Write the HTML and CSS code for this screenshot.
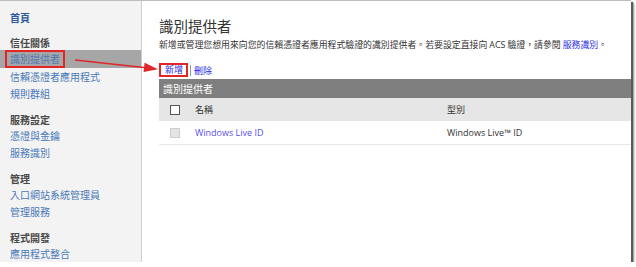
FILE: index.html
```html
<!DOCTYPE html>
<html lang="zh-Hant">
<head>
  <meta charset="UTF-8">
  <title>識別提供者</title>
  <link rel="stylesheet" href="styles.css">
</head>
<body>

<div class="window">
  <div class="sidebar">
    <a class="home" href="#">首頁</a>

    <div class="group">
      <div class="group-title">信任關係</div>
      <a class="item active" href="#"><span class="marked">識別提供者</span></a>
      <a class="item" href="#">信賴憑證者應用程式</a>
      <a class="item" href="#">規則群組</a>
    </div>

    <div class="group">
      <div class="group-title">服務設定</div>
      <a class="item" href="#">憑證與金鑰</a>
      <a class="item" href="#">服務識別</a>
    </div>

    <div class="group">
      <div class="group-title">管理</div>
      <a class="item" href="#">入口網站系統管理員</a>
      <a class="item" href="#">管理服務</a>
    </div>

    <div class="group">
      <div class="group-title">程式開發</div>
      <a class="item" href="#">應用程式整合</a>
    </div>
  </div>

  <div class="main">
    <h1>識別提供者</h1>
    <p class="desc">新增或管理您想用來向您的信賴憑證者應用程式驗證的識別提供者。若要設定直接向 <span class="latin">ACS</span> 驗證，請參閱 <a href="#">服務識別</a>。</p>

    <div class="actions">
      <a class="marked-action" href="#">新增</a><span class="sep"></span><a href="#">刪除</a>
    </div>

    <div class="grid">
      <div class="grid-title">識別提供者</div>
      <div class="row head">
        <span class="check"></span>
        <span>名稱</span>
        <span>型別</span>
      </div>
      <div class="row">
        <span class="check disabled"></span>
        <a class="latin" href="#">Windows Live ID</a>
        <span class="latin">Windows Live™ ID</span>
      </div>
    </div>
  </div>

  <!-- callout arrow from the menu to the add link -->
  <svg class="arrow" width="170" height="80" viewBox="0 0 170 80">
    <line x1="75" y1="59" x2="146" y2="66.8" stroke="#e0262a" stroke-width="1.6"/>
    <polygon points="158,68.2 144.6,61.8 143.6,71" fill="#e0262a"/>
  </svg>
</div>

</body>
</html>
```

FILE: styles.css
```css
body {
  margin: 0;
  background: #fff;
  font-family: "Noto Sans CJK TC", "Open Sans", sans-serif;
  color: #333;
}
a {
  text-decoration: none;
}
.window {
  position: relative;
  display: flex;
  width: 631px;
  height: 261px;
  border-top: 1px solid #bdbdbd;
  background: #fff;
  box-shadow: 2px 2px 1px #5a5a5a, 3px 3px 2px #9a9a9a;
}
.sidebar {
  width: 141px;
  flex-shrink: 0;
  background: #f3f3f3;
  border-right: 1px solid #cfcfcf;
  padding-top: 8px;
  font-size: 10px;
}
.home {
  display: block;
  padding-left: 10px;
  line-height: 17px;
  font-weight: bold;
  color: #2d5a9c;
}
.group {
  margin-top: 9px;
}
.group-title {
  padding-left: 10px;
  line-height: 15px;
  font-weight: bold;
  color: #4a4a4a;
}
.item {
  display: block;
  padding-left: 10px;
  height: 17.5px;
  line-height: 17.5px;
  color: #4a79b8;
}
.item.active {
  background: #a6a6a6;
  padding-left: 5px;
}
.marked {
  display: inline-block;
  box-sizing: border-box;
  height: 17.5px;
  line-height: 13.5px;
  padding: 0 3px;
  border: 2px solid #e42526;
}
.main {
  flex: 1;
  padding: 16px 0 0 17px;
}
h1 {
  margin: 0;
  font-size: 14.5px;
  line-height: 18px;
  font-weight: normal;
  color: #333;
}
.desc {
  margin: 4px 0 0;
  font-size: 8.9px;
  line-height: 12px;
  white-space: nowrap;
  color: #333;
}
.desc a {
  color: #2f2fe0;
}
.latin {
  font-family: "Open Sans", "Noto Sans CJK TC", sans-serif;
}
.actions {
  display: flex;
  align-items: center;
  margin-top: 12px;
  height: 14px;
  font-size: 9px;
}
.actions a {
  color: #2727e6;
}
.marked-action {
  box-sizing: border-box;
  height: 14px;
  line-height: 10px;
  padding: 0 3px 0 4px;
  border: 2px solid #e42526;
}
.sep {
  width: 1px;
  height: 11px;
  margin: 0 3px 0 2px;
  background: #9a9a9a;
}
.grid {
  margin-top: 2px;
}
.grid-title {
  height: 19px;
  line-height: 19px;
  padding-left: 4px;
  background: #7f7f7f;
  color: #fff;
  font-size: 10px;
}
.row {
  display: grid;
  grid-template-columns: 36px 252px 1fr;
  align-items: center;
  height: 23px;
  font-size: 9px;
  color: #333;
  border-bottom: 1px solid #e8e8e8;
}
.row.head {
  background: #e6e6e6;
  border-bottom: none;
}
.row .latin {
  font-size: 9px;
}
.row a {
  color: #5a4fe8;
}
.check {
  justify-self: start;
  margin-left: 11px;
  box-sizing: border-box;
  width: 10px;
  height: 10px;
  background: #fff;
  border: 1px solid #555;
}
.check.disabled {
  background: #e4e4e4;
  border-color: #cdcdcd;
}
.arrow {
  position: absolute;
  left: 0;
  top: 0;
}
```
